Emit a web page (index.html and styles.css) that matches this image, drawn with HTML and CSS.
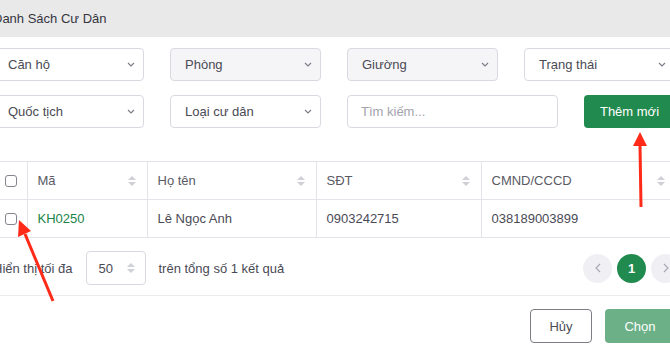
FILE: index.html
```html
<!DOCTYPE html>
<html lang="vi">
<head>
<meta charset="UTF-8" />
<meta name="viewport" content="width=device-width, initial-scale=1" />
<title>Danh Sách Cư Dân</title>
<link rel="stylesheet" href="styles.css">
</head>
<body>

<div class="modal">
  <div class="modal-header">
    <h2>Danh Sách Cư Dân</h2>
  </div>

  <div class="modal-body">
    <div class="filters row-1">
      <div class="field">
        <span>Căn hộ</span>
        <svg class="chev" width="8" height="5" viewBox="0 0 8 5"><path d="M1 1l3 3 3-3" fill="none" stroke="#7a7a85" stroke-width="1.1"/></svg>
      </div>
      <div class="field disabled">
        <span>Phòng</span>
        <svg class="chev" width="8" height="5" viewBox="0 0 8 5"><path d="M1 1l3 3 3-3" fill="none" stroke="#7a7a85" stroke-width="1.1"/></svg>
      </div>
      <div class="field disabled">
        <span>Giường</span>
        <svg class="chev" width="8" height="5" viewBox="0 0 8 5"><path d="M1 1l3 3 3-3" fill="none" stroke="#7a7a85" stroke-width="1.1"/></svg>
      </div>
      <div class="field">
        <span>Trạng thái</span>
        <svg class="chev" width="8" height="5" viewBox="0 0 8 5"><path d="M1 1l3 3 3-3" fill="none" stroke="#7a7a85" stroke-width="1.1"/></svg>
      </div>
    </div>

    <div class="filters row-2">
      <div class="field">
        <span>Quốc tịch</span>
        <svg class="chev" width="8" height="5" viewBox="0 0 8 5"><path d="M1 1l3 3 3-3" fill="none" stroke="#7a7a85" stroke-width="1.1"/></svg>
      </div>
      <div class="field">
        <span>Loại cư dân</span>
        <svg class="chev" width="8" height="5" viewBox="0 0 8 5"><path d="M1 1l3 3 3-3" fill="none" stroke="#7a7a85" stroke-width="1.1"/></svg>
      </div>
      <input class="search" type="text" placeholder="Tìm kiếm...">
      <button class="btn-add">Thêm mới</button>
    </div>

    <table class="grid">
      <thead>
        <tr>
          <th class="col-check"><span class="check"></span></th>
          <th class="col-ma"><div class="th-in">Mã<span class="sort"><i class="up"></i><i class="down"></i></span></div></th>
          <th class="col-name"><div class="th-in">Họ tên<span class="sort"><i class="up"></i><i class="down"></i></span></div></th>
          <th class="col-phone"><div class="th-in">SĐT<span class="sort"><i class="up"></i><i class="down"></i></span></div></th>
          <th class="col-id"><div class="th-in">CMND/CCCD<span class="sort"><i class="up"></i><i class="down"></i></span></div></th>
        </tr>
      </thead>
      <tbody>
        <tr>
          <td class="col-check"><span class="check"></span></td>
          <td class="code">KH0250</td>
          <td>Lê Ngọc Anh</td>
          <td>0903242715</td>
          <td>038189003899</td>
        </tr>
      </tbody>
    </table>

    <div class="paging">
      <div class="paging-left">
        <span>Hiển thị tối đa</span>
        <div class="size">
          <span>50</span>
          <span class="sort"><i class="up"></i><i class="down"></i></span>
        </div>
        <span>trên tổng số 1 kết quả</span>
      </div>
      <div class="pages">
        <span class="pg nav">
          <svg width="6" height="10" viewBox="0 0 6 10"><path d="M5 1L1 5l4 4" fill="none" stroke="#a9a9b3" stroke-width="1.2"/></svg>
        </span>
        <span class="pg active">1</span>
        <span class="pg nav">
          <svg width="6" height="10" viewBox="0 0 6 10"><path d="M1 1l4 4-4 4" fill="none" stroke="#a9a9b3" stroke-width="1.2"/></svg>
        </span>
      </div>
    </div>
  </div>

  <div class="modal-footer">
    <button class="btn-cancel">Hủy</button>
    <button class="btn-ok">Chọn</button>
  </div>
</div>

<!-- annotation arrows -->
<svg class="marks" width="670" height="356" viewBox="0 0 670 356">
  <line x1="53" y1="301" x2="25" y2="234" stroke="#ff2a17" stroke-width="3"/>
  <polygon points="19,220 31,231 18,237" fill="#ff2a17"/>
  <line x1="641" y1="207" x2="640" y2="145" stroke="#ff2a17" stroke-width="3"/>
  <polygon points="640,132 647,146 633,146" fill="#ff2a17"/>
</svg>

</body>
</html>
```

FILE: styles.css
```css
body {
  margin: 0;
  background: #fff;
  font-family: "Liberation Sans", Arial, sans-serif;
  font-size: 13px;
  color: #45454f;
  overflow: hidden;
  width: 670px;
  height: 356px;
  position: relative;
}
.modal {
  margin-left: -20px;
  width: 720px;
}
.modal-header {
  background: #e9e9ea;
  height: 37px;
  display: flex;
  align-items: center;
  padding-left: 13px;
}
.modal-header h2 {
  margin: 0;
  font-size: 13px;
  font-weight: normal;
  color: #35353d;
}
.modal-body {
  padding: 11px 13px 0;
  border-bottom: 1px solid #ececef;
}
.filters {
  display: grid;
  column-gap: 26px;
  height: 33px;
}
.row-1 {
  grid-template-columns: 151px 151px 151px 151px;
}
.row-2 {
  margin-top: 14px;
  grid-template-columns: 151px 151px 211px 91px;
}
.field {
  box-sizing: border-box;
  border: 1px solid #d9d9e1;
  border-radius: 4px;
  background: #fff;
  display: flex;
  align-items: center;
  justify-content: space-between;
  padding: 0 8px 0 14px;
  color: #4a4a55;
}
.field.disabled {
  background: #f5f5f7;
}
.chev {
  display: block;
}
.search {
  box-sizing: border-box;
  border: 1px solid #d9d9e1;
  border-radius: 4px;
  padding: 0 13px;
  font-family: inherit;
  font-size: 13px;
  color: #4a4a55;
  outline: none;
}
.search::placeholder {
  color: #a3a3ad;
}
.btn-add {
  border: none;
  border-radius: 4px;
  background: #218a4e;
  color: #fff;
  font-family: inherit;
  font-size: 13px;
  padding: 0;
}

.grid {
  margin-top: 33px;
  border-collapse: collapse;
  width: 683px;
  table-layout: fixed;
}
.grid th, .grid td {
  height: 37px;
  border-top: 1px solid #e3e3ea;
  border-bottom: 1px solid #e3e3ea;
  border-left: 1px solid #e3e3ea;
  padding: 0 10px;
  text-align: left;
  font-weight: normal;
  color: #4a4a55;
}
.grid th:first-child, .grid td:first-child {
  border-left: none;
}
.col-check { width: 34px; padding: 0 0 0 12px !important; box-sizing: border-box; }
.col-ma { width: 99px; }
.col-name { width: 148px; }
.col-phone { width: 144px; }
.grid th.col-ma, .grid th.col-name, .grid th.col-phone, .grid th.col-id {
  color: #5a5a64;
}
.th-in {
  display: flex;
  align-items: center;
  justify-content: space-between;
}
.check {
  display: block;
  width: 10px;
  height: 10px;
  border: 1px solid #858590;
  border-radius: 3px;
  background: #fff;
}
.code {
  color: #208448 !important;
}
.sort {
  display: flex;
  flex-direction: column;
  gap: 2px;
  margin-right: 1px;
}
.sort i {
  display: block;
  width: 0;
  height: 0;
  border-left: 4px solid transparent;
  border-right: 4px solid transparent;
}
.sort .up { border-bottom: 4px solid #d0d0d8; }
.sort .down { border-top: 4px solid #d0d0d8; }

.paging {
  display: flex;
  justify-content: space-between;
  align-items: center;
  margin-top: 13px;
  height: 34px;
  padding-bottom: 10px;
}
.paging-left {
  display: flex;
  align-items: center;
  gap: 13px;
  color: #4a4a55;
}
.size {
  box-sizing: border-box;
  width: 60px;
  height: 34px;
  border: 1px solid #d9d9e1;
  border-radius: 4px;
  display: flex;
  align-items: center;
  justify-content: space-between;
  padding: 0 9px 0 12px;
}
.pages {
  display: flex;
  gap: 5px;
  margin-right: 7px;
}
.pg {
  width: 29px;
  height: 29px;
  border-radius: 50%;
  display: flex;
  align-items: center;
  justify-content: center;
}
.pg.nav {
  background: #efeff4;
}
.pg.active {
  background: #218a4e;
  color: #fff;
  font-weight: bold;
  font-size: 13px;
}

.modal-footer {
  display: flex;
  gap: 13px;
  padding: 13px 0 0 550px;
}
.modal-footer button {
  height: 34px;
  border-radius: 4px;
  font-family: inherit;
  font-size: 13px;
}
.btn-cancel {
  width: 62px;
  background: #fff;
  border: 1px solid #7c7c84;
  color: #4a4a55;
}
.btn-ok {
  width: 70px;
  border: none;
  background: #6cb088;
  color: #fff;
}

.marks {
  position: absolute;
  top: 0;
  left: 0;
  pointer-events: none;
}
```
